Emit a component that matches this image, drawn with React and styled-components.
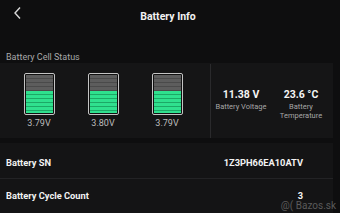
import React from "react";
import styled, { createGlobalStyle } from "styled-components";

const Global = createGlobalStyle`
  html, body { margin: 0; padding: 0; background: #0e0e0f; }
  body { font-family: Roboto, "Noto Sans", Arial, sans-serif; overflow: hidden; }
`;

const Page = styled.div`
  width: 340px;
  height: 213px;
  background: #0e0e0f;
  display: flex;
  flex-direction: column;
  position: relative;
  overflow: hidden;
`;

const Header = styled.div`
  height: 32px;
  display: flex;
  align-items: center;
  justify-content: center;
  position: relative;
`;

const Back = styled.div`
  position: absolute;
  left: 12px;
  top: 6px;
  width: 12px;
  height: 14px;
  display: flex;
`;

const Title = styled.div`
  color: #f2f2f2;
  font-size: 10.5px;
  font-weight: 700;
  margin-left: -4px;
`;

const SectionLabel = styled.div`
  color: #a8a8a8;
  font-size: 9px;
  padding: 20px 0 0 6px;
  height: 11px;
  line-height: 11px;
`;

const StatusCard = styled.div`
  width: 333px;
  height: 75px;
  background: #151516;
  display: flex;
`;

const Cells = styled.div`
  width: 203px;
  padding-left: 7px;
  display: flex;
`;

const Cell = styled.div`
  width: 64px;
  display: flex;
  flex-direction: column;
  align-items: center;
  padding-top: 10px;
`;

const Battery = styled.div`
  width: 27px;
  height: 38px;
  border: 1px solid #c4c4c4;
  border-radius: 2px;
  background: #111;
  padding: 1px;
  box-sizing: content-box;
  display: flex;
  flex-direction: column;
  margin-left: 0px;
`;

const Empty = styled.div`
  flex: 1;
  background: repeating-linear-gradient(
    to bottom,
    #5d5d5d 0px,
    #5d5d5d 3px,
    #4a4a4a 3px,
    #4a4a4a 4px
  );
`;

const Fill = styled.div`
  background: repeating-linear-gradient(
    to bottom,
    #2fe08e 0px,
    #2fe08e 3px,
    #1ca866 3px,
    #1ca866 4px
  );
`;

const CellVolt = styled.div`
  color: #bdbdbd;
  font-size: 9px;
  margin-top: 3px;
  margin-left: 0px;
`;

const Divider = styled.div`
  width: 1px;
  background: #2a2a2c;
  margin-top: 1px;
`;

const Stats = styled.div`
  flex: 1;
  display: flex;
`;

const Stat = styled.div`
  width: 60px;
  display: flex;
  flex-direction: column;
  align-items: center;
  padding-top: 25px;
`;

const StatValue = styled.div`
  color: #f4f4f4;
  font-size: 10.5px;
  font-weight: 700;
  line-height: 13px;
`;

const StatLabel = styled.div`
  color: #a6a6a6;
  font-size: 7.5px;
  line-height: 8.5px;
  text-align: center;
  margin-top: 2px;
`;

const ListCard = styled.div`
  margin-top: 5px;
  width: 333px;
  background: #141415;
  display: flex;
  flex-direction: column;
  flex: 1;
`;

const Row = styled.div`
  height: ${(p) => p.$height}px;
  box-sizing: border-box;
  display: flex;
  align-items: flex-start;
  justify-content: space-between;
  padding: ${(p) => p.$top}px 30px 0 6px;
  line-height: 12px;
  border-top: ${(p) => (p.$divided ? "1px solid #232325" : "none")};
  color: #f2f2f2;
  font-size: 9.3px;
  font-weight: 700;
`;

const Watermark = styled.div`
  position: absolute;
  right: 4px;
  bottom: 2px;
  color: #5a5a5a;
  font-size: 10px;
`;

const Chevron = () => (
  <svg width="12" height="14" viewBox="0 0 12 14">
    <path d="M8 1.5 L3 7 L8 12.5" fill="none" stroke="#d8d8d8" strokeWidth="1.4" />
  </svg>
);

const cells = ["3.79V", "3.80V", "3.79V"];

export default function App() {
  return (
    <Page>
      <Global />
      <Header>
        <Back>
          <Chevron />
        </Back>
        <Title>Battery Info</Title>
      </Header>
      <SectionLabel>Battery Cell Status</SectionLabel>
      <StatusCard>
        <Cells>
          {cells.map((v, i) => (
            <Cell key={i}>
              <Battery>
                <Empty />
                <Fill style={{ height: "22px" }} />
              </Battery>
              <CellVolt>{v}</CellVolt>
            </Cell>
          ))}
        </Cells>
        <Divider />
        <Stats>
          <Stat>
            <StatValue>11.38 V</StatValue>
            <StatLabel>Battery Voltage</StatLabel>
          </Stat>
          <Stat>
            <StatValue>23.6 °C</StatValue>
            <StatLabel>
              Battery
              <br />
              Temperature
            </StatLabel>
          </Stat>
        </Stats>
      </StatusCard>
      <ListCard>
        <Row $height={35} $top={14}>
          <span>Battery SN</span>
          <span>1Z3PH66EA10ATV</span>
        </Row>
        <Row $divided $height={35} $top={11}>
          <span>Battery Cycle Count</span>
          <span>3</span>
        </Row>
      </ListCard>
      <Watermark>@( Bazos.sk</Watermark>
    </Page>
  );
}
